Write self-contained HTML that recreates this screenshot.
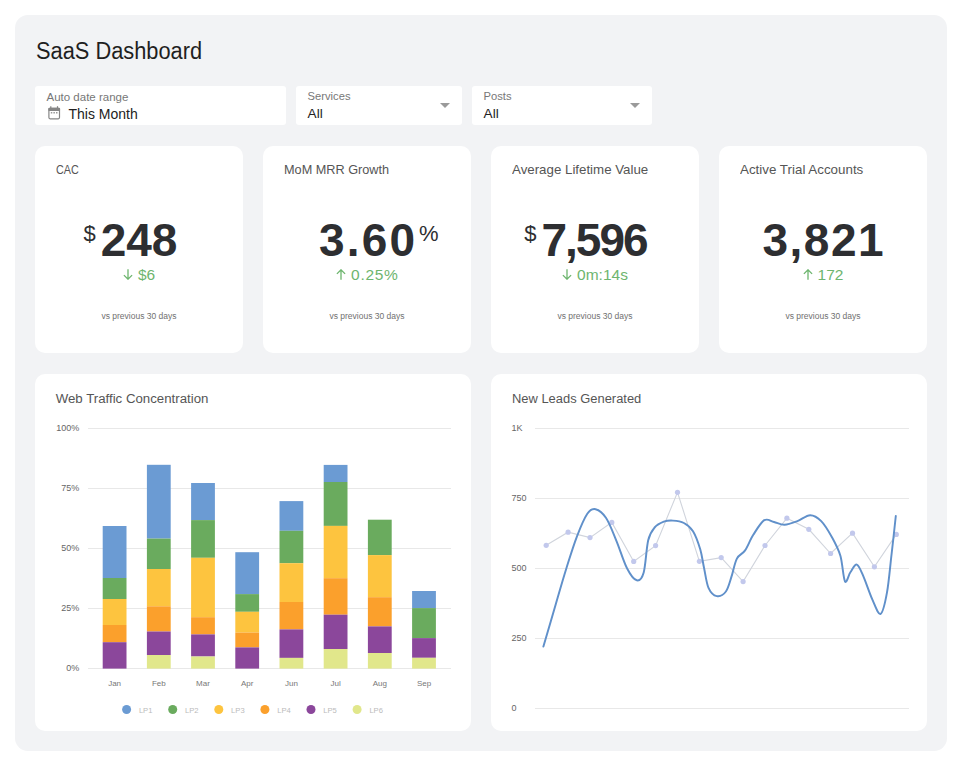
<!DOCTYPE html>
<html><head><meta charset="utf-8">
<style>
html,body{margin:0;padding:0;background:#fff;width:962px;height:766px;overflow:hidden;}
body{position:relative;font-family:"Liberation Sans",sans-serif;}
.a{position:absolute;white-space:nowrap;line-height:1;}
#panel{position:absolute;left:15px;top:15px;width:932px;height:736px;background:#f2f3f5;border-radius:13px;}
.card{position:absolute;background:#fff;border-radius:10px;}
.fbox{position:absolute;background:#fff;border-radius:3px;top:86px;height:39px;}
.klab{font-size:13.5px;color:#555;top:163.1px;}
.big{font-size:46px;font-weight:700;color:#2d2e31;top:217px;text-align:center;width:208px;}
.big span.n{position:relative;display:inline-block;}
.cur{position:absolute;font-size:22px;font-weight:400;right:100%;top:6px;margin-right:5px;}
.pct{position:absolute;font-size:22px;font-weight:400;left:100%;top:6px;margin-left:4px;}
.delta{font-size:15.5px;color:#6db56e;top:266.6px;text-align:center;width:208px;}
.vs{font-size:8.5px;color:#707070;top:312.3px;text-align:center;width:208px;}
.ctitle{font-size:13.25px;color:#555;top:391.6px;}
.yl{font-size:9px;color:#666;}
.xl{position:absolute;white-space:nowrap;line-height:1;font-size:8px;color:#777;top:679.7px;width:40px;text-align:center;}
.lg{position:absolute;white-space:nowrap;line-height:1;font-size:7.6px;color:#bbb;top:706.6px;}
svg.ov{position:absolute;left:0;top:0;}
.arr{display:inline-block;width:10px;height:11px;margin-right:5px;vertical-align:baseline;}
</style></head><body>
<div id="panel"></div>
<div class="a" style="left:36px;top:39.6px;font-size:23px;color:#1f1f1f;transform:scaleX(0.948);transform-origin:0 0;">SaaS Dashboard</div>

<div class="fbox" style="left:35px;width:251px;"></div>
<div class="fbox" style="left:296px;width:166px;"></div>
<div class="fbox" style="left:472px;width:180px;"></div>

<div class="a" style="left:46.5px;top:91.8px;font-size:11.5px;color:#777;">Auto date range</div>
<div class="a" style="left:68.5px;top:106.9px;font-size:14px;color:#222;">This Month</div>
<div class="a" style="left:307.6px;top:91.1px;font-size:11.2px;color:#777;">Services</div>
<div class="a" style="left:307.6px;top:106.5px;font-size:13.6px;color:#222;">All</div>
<div class="a" style="left:483.6px;top:91.1px;font-size:11.2px;color:#777;">Posts</div>
<div class="a" style="left:483.6px;top:106.5px;font-size:13.6px;color:#222;">All</div>

<div class="card" style="left:35px;top:146px;width:208px;height:207px;"></div>
<div class="card" style="left:263px;top:146px;width:208px;height:207px;"></div>
<div class="card" style="left:491px;top:146px;width:208px;height:207px;"></div>
<div class="card" style="left:719px;top:146px;width:208px;height:207px;"></div>

<div class="a klab" style="left:56px;transform:scaleX(0.80);transform-origin:0 0;">CAC</div>
<div class="a klab" style="left:283.5px;transform:scaleX(0.94);transform-origin:0 0;">MoM MRR Growth</div>
<div class="a klab" style="left:511.5px;transform:scaleX(0.985);transform-origin:0 0;">Average Lifetime Value</div>
<div class="a klab" style="left:740px;transform:scaleX(0.99);transform-origin:0 0;">Active Trial Accounts</div>

<div class="a big" style="left:35px;"><span class="n"><span class="cur">$</span>248</span></div>
<div class="a big" style="left:263px;"><span class="n"><span style="letter-spacing:2.2px">3.6</span>0<span class="pct">%</span></span></div>
<div class="a big" style="left:491px;"><span class="n"><span class="cur">$</span><span style="letter-spacing:-2px">7,59</span>6</span></div>
<div class="a big" style="left:719px;"><span class="n"><span style="letter-spacing:1.5px">3,82</span>1</span></div>

<div class="a delta" style="left:35px;"><svg class="arr" viewBox="0 0 10 11"><path d="M5 0.3V10.2M0.9 6.1L5 10.2L9.1 6.1" fill="none" stroke="#6db56e" stroke-width="1.3"/></svg>$6</div>
<div class="a delta" style="left:263px;"><svg class="arr" viewBox="0 0 10 11"><path d="M5 10.7V0.8M0.9 4.9L5 0.8L9.1 4.9" fill="none" stroke="#6db56e" stroke-width="1.3"/></svg><span style="letter-spacing:0.7px">0.25</span>%</div>
<div class="a delta" style="left:491px;"><svg class="arr" viewBox="0 0 10 11"><path d="M5 0.3V10.2M0.9 6.1L5 10.2L9.1 6.1" fill="none" stroke="#6db56e" stroke-width="1.3"/></svg>0m:14s</div>
<div class="a delta" style="left:719px;"><svg class="arr" viewBox="0 0 10 11"><path d="M5 10.7V0.8M0.9 4.9L5 0.8L9.1 4.9" fill="none" stroke="#6db56e" stroke-width="1.3"/></svg>172</div>

<div class="a vs" style="left:35px;">vs previous 30 days</div>
<div class="a vs" style="left:263px;">vs previous 30 days</div>
<div class="a vs" style="left:491px;">vs previous 30 days</div>
<div class="a vs" style="left:719px;">vs previous 30 days</div>

<div class="card" style="left:35px;top:374px;width:436px;height:357px;"></div>
<div class="card" style="left:491px;top:374px;width:436px;height:357px;"></div>

<div class="a ctitle" style="left:55.7px;">Web Traffic Concentration</div>
<div class="a ctitle" style="left:511.7px;transform:scaleX(0.975);transform-origin:0 0;">New Leads Generated</div>

<div class="a yl" style="left:39.3px;width:40px;text-align:right;top:424px;">100%</div>
<div class="a yl" style="left:39.3px;width:40px;text-align:right;top:484px;">75%</div>
<div class="a yl" style="left:39.3px;width:40px;text-align:right;top:544px;">50%</div>
<div class="a yl" style="left:39.3px;width:40px;text-align:right;top:604px;">25%</div>
<div class="a yl" style="left:39.3px;width:40px;text-align:right;top:664.2px;">0%</div>

<div class="a yl" style="left:511.5px;top:424px;">1K</div>
<div class="a yl" style="left:511.5px;top:494px;">750</div>
<div class="a yl" style="left:511.5px;top:564px;">500</div>
<div class="a yl" style="left:511.5px;top:634px;">250</div>
<div class="a yl" style="left:511.5px;top:704px;">0</div>

<div class="xl" style="left:94.6px">Jan</div>
<div class="xl" style="left:138.8px">Feb</div>
<div class="xl" style="left:183.0px">Mar</div>
<div class="xl" style="left:227.2px">Apr</div>
<div class="xl" style="left:271.4px">Jun</div>
<div class="xl" style="left:315.6px">Jul</div>
<div class="xl" style="left:359.8px">Aug</div>
<div class="xl" style="left:404.0px">Sep</div>
<div class="lg" style="left:138.9px">LP1</div>
<div class="lg" style="left:185.0px">LP2</div>
<div class="lg" style="left:231.1px">LP3</div>
<div class="lg" style="left:277.2px">LP4</div>
<div class="lg" style="left:323.3px">LP5</div>
<div class="lg" style="left:369.4px">LP6</div>

<svg class="ov" width="962" height="766" viewBox="0 0 962 766">
<!-- dropdown triangles -->
<polygon points="440,103 450,103 445,108" fill="#9a9a9a"/>
<polygon points="630,103 640,103 635,108" fill="#9a9a9a"/>
<!-- calendar icon -->
<g fill="none" stroke="#858585" stroke-width="1.2">
<rect x="48.9" y="108.3" width="10.6" height="10.5" rx="1.2"/>
<line x1="50.8" y1="106.2" x2="50.8" y2="108.5"/>
<line x1="57.5" y1="106.2" x2="57.5" y2="108.5"/>
</g>
<rect x="48.3" y="107.7" width="11.8" height="3.3" rx="1" fill="#858585"/>
<g fill="#9a9a9a"><rect x="50.8" y="112" width="1.5" height="1.5"/><rect x="53.4" y="112" width="1.5" height="1.5"/><rect x="56" y="112" width="1.5" height="1.5"/></g>
<!-- bar chart gridlines -->
<g stroke="#e8e8e8" stroke-width="1">
<line x1="88" y1="428.5" x2="451" y2="428.5"/>
<line x1="88" y1="488.5" x2="451" y2="488.5"/>
<line x1="88" y1="548.5" x2="451" y2="548.5"/>
<line x1="88" y1="608.5" x2="451" y2="608.5"/>
<line x1="88" y1="668.5" x2="451" y2="668.5"/>
</g>
<rect x="102.7" y="526.0" width="23.8" height="52.0" fill="#6b9bd3"/>
<rect x="102.7" y="578.0" width="23.8" height="21.0" fill="#6aab5e"/>
<rect x="102.7" y="599.0" width="23.8" height="26.0" fill="#fdc43f"/>
<rect x="102.7" y="625.0" width="23.8" height="17.2" fill="#fba02c"/>
<rect x="102.7" y="642.2" width="23.8" height="26.4" fill="#8b479b"/>
<rect x="146.9" y="464.8" width="23.8" height="73.8" fill="#6b9bd3"/>
<rect x="146.9" y="538.6" width="23.8" height="30.4" fill="#6aab5e"/>
<rect x="146.9" y="569.0" width="23.8" height="37.3" fill="#fdc43f"/>
<rect x="146.9" y="606.3" width="23.8" height="25.2" fill="#fba02c"/>
<rect x="146.9" y="631.5" width="23.8" height="23.5" fill="#8b479b"/>
<rect x="146.9" y="655.0" width="23.8" height="13.6" fill="#e1e78b"/>
<rect x="191.1" y="483.0" width="23.8" height="37.1" fill="#6b9bd3"/>
<rect x="191.1" y="520.1" width="23.8" height="37.7" fill="#6aab5e"/>
<rect x="191.1" y="557.8" width="23.8" height="59.4" fill="#fdc43f"/>
<rect x="191.1" y="617.2" width="23.8" height="17.2" fill="#fba02c"/>
<rect x="191.1" y="634.4" width="23.8" height="22.1" fill="#8b479b"/>
<rect x="191.1" y="656.5" width="23.8" height="12.1" fill="#e1e78b"/>
<rect x="235.3" y="552.2" width="23.8" height="41.9" fill="#6b9bd3"/>
<rect x="235.3" y="594.1" width="23.8" height="17.7" fill="#6aab5e"/>
<rect x="235.3" y="611.8" width="23.8" height="20.8" fill="#fdc43f"/>
<rect x="235.3" y="632.6" width="23.8" height="14.8" fill="#fba02c"/>
<rect x="235.3" y="647.4" width="23.8" height="21.2" fill="#8b479b"/>
<rect x="279.5" y="501.1" width="23.8" height="29.7" fill="#6b9bd3"/>
<rect x="279.5" y="530.8" width="23.8" height="32.4" fill="#6aab5e"/>
<rect x="279.5" y="563.2" width="23.8" height="38.8" fill="#fdc43f"/>
<rect x="279.5" y="602.0" width="23.8" height="27.4" fill="#fba02c"/>
<rect x="279.5" y="629.4" width="23.8" height="28.5" fill="#8b479b"/>
<rect x="279.5" y="657.9" width="23.8" height="10.7" fill="#e1e78b"/>
<rect x="323.7" y="464.9" width="23.8" height="17.1" fill="#6b9bd3"/>
<rect x="323.7" y="482.0" width="23.8" height="43.9" fill="#6aab5e"/>
<rect x="323.7" y="525.9" width="23.8" height="52.3" fill="#fdc43f"/>
<rect x="323.7" y="578.2" width="23.8" height="36.5" fill="#fba02c"/>
<rect x="323.7" y="614.7" width="23.8" height="34.3" fill="#8b479b"/>
<rect x="323.7" y="649.0" width="23.8" height="19.6" fill="#e1e78b"/>
<rect x="367.9" y="519.7" width="23.8" height="35.4" fill="#6aab5e"/>
<rect x="367.9" y="555.1" width="23.8" height="42.1" fill="#fdc43f"/>
<rect x="367.9" y="597.2" width="23.8" height="29.2" fill="#fba02c"/>
<rect x="367.9" y="626.4" width="23.8" height="26.6" fill="#8b479b"/>
<rect x="367.9" y="653.0" width="23.8" height="15.6" fill="#e1e78b"/>
<rect x="412.1" y="591.0" width="23.8" height="17.1" fill="#6b9bd3"/>
<rect x="412.1" y="608.1" width="23.8" height="30.0" fill="#6aab5e"/>
<rect x="412.1" y="638.1" width="23.8" height="19.7" fill="#8b479b"/>
<rect x="412.1" y="657.8" width="23.8" height="10.8" fill="#e1e78b"/>
<circle cx="126.6" cy="709.5" r="4.5" fill="#6b9bd3"/>
<circle cx="172.7" cy="709.5" r="4.5" fill="#6aab5e"/>
<circle cx="218.8" cy="709.5" r="4.5" fill="#fdc43f"/>
<circle cx="264.9" cy="709.5" r="4.5" fill="#fba02c"/>
<circle cx="311.0" cy="709.5" r="4.5" fill="#8b479b"/>
<circle cx="357.1" cy="709.5" r="4.5" fill="#e1e78b"/>

<!-- line chart gridlines -->
<g stroke="#e8e8e8" stroke-width="1">
<line x1="535" y1="428.5" x2="909" y2="428.5"/>
<line x1="535" y1="498.5" x2="909" y2="498.5"/>
<line x1="535" y1="568.5" x2="909" y2="568.5"/>
<line x1="535" y1="638.5" x2="909" y2="638.5"/>
<line x1="535" y1="708.5" x2="909" y2="708.5"/>
</g>
<path d="M546.2,545.3 L568.1,532.2 L590.0,537.6 L611.8,522.4 L633.7,561.4 L655.6,545.6 L677.5,492.3 L699.4,561.3 L721.2,557.6 L743.1,581.6 L765.0,545.5 L786.9,518.2 L808.8,529.3 L830.6,553.5 L852.5,533.2 L874.4,566.8 L896.3,534.4" fill="none" stroke="#d0d4dc" stroke-width="1.1"/>
<circle cx="546.2" cy="545.3" r="2.6" fill="#c2c8ec"/>
<circle cx="568.1" cy="532.2" r="2.6" fill="#c2c8ec"/>
<circle cx="590.0" cy="537.6" r="2.6" fill="#c2c8ec"/>
<circle cx="611.8" cy="522.4" r="2.6" fill="#c2c8ec"/>
<circle cx="633.7" cy="561.4" r="2.6" fill="#c2c8ec"/>
<circle cx="655.6" cy="545.6" r="2.6" fill="#c2c8ec"/>
<circle cx="677.5" cy="492.3" r="2.6" fill="#c2c8ec"/>
<circle cx="699.4" cy="561.3" r="2.6" fill="#c2c8ec"/>
<circle cx="721.2" cy="557.6" r="2.6" fill="#c2c8ec"/>
<circle cx="743.1" cy="581.6" r="2.6" fill="#c2c8ec"/>
<circle cx="765.0" cy="545.5" r="2.6" fill="#c2c8ec"/>
<circle cx="786.9" cy="518.2" r="2.6" fill="#c2c8ec"/>
<circle cx="808.8" cy="529.3" r="2.6" fill="#c2c8ec"/>
<circle cx="830.6" cy="553.5" r="2.6" fill="#c2c8ec"/>
<circle cx="852.5" cy="533.2" r="2.6" fill="#c2c8ec"/>
<circle cx="874.4" cy="566.8" r="2.6" fill="#c2c8ec"/>
<circle cx="896.3" cy="534.4" r="2.6" fill="#c2c8ec"/>
<path d="M543.4,646.6 C545.5,639.5 552.1,616.8 555.9,603.7 C559.7,590.6 562.9,579.4 566.4,568.2 C569.9,557.1 573.3,545.9 576.8,536.8 C580.3,527.7 584.2,518.4 587.3,513.8 C590.4,509.2 592.5,508.5 595.6,509.2 C598.7,509.9 602.6,512.7 606.1,518.0 C609.6,523.3 613.0,532.6 616.5,541.0 C620.0,549.4 623.6,561.7 627.0,568.2 C630.4,574.8 634.0,579.6 636.8,580.3 C639.6,581.0 641.8,579.1 643.7,572.4 C645.6,565.7 646.4,547.8 648.2,540.3 C650.0,532.8 652.0,530.6 654.6,527.5 C657.2,524.4 660.8,522.9 663.8,521.7 C666.8,520.6 669.5,520.4 672.9,520.6 C676.2,520.8 680.5,521.2 683.9,523.0 C687.2,524.8 690.3,526.8 693.0,531.2 C695.7,535.6 698.5,543.4 700.3,549.5 C702.1,555.6 702.6,561.3 704.0,567.7 C705.4,574.1 706.4,583.1 708.5,587.8 C710.6,592.5 713.9,595.5 716.8,596.1 C719.7,596.7 723.5,594.7 725.9,591.5 C728.3,588.3 729.6,582.4 731.4,576.9 C733.2,571.4 734.6,563.0 736.9,558.6 C739.2,554.2 742.4,554.4 745.1,550.4 C747.8,546.4 750.1,539.8 753.3,534.8 C756.5,529.8 760.8,522.3 764.3,520.2 C767.8,518.1 770.6,521.2 774.0,522.0 C777.4,522.8 780.7,524.9 784.6,524.7 C788.5,524.6 793.1,522.7 797.4,521.1 C801.7,519.5 806.2,515.2 810.2,515.2 C814.2,515.2 817.6,517.4 821.2,521.1 C824.9,524.8 828.9,531.7 832.1,537.5 C835.3,543.3 838.2,548.5 840.4,555.8 C842.5,563.1 843.3,578.6 845.0,581.4 C846.7,584.1 848.4,575.1 850.4,572.3 C852.4,569.5 854.7,564.0 856.8,564.6 C858.9,565.2 860.6,570.0 863.2,575.9 C865.8,581.8 869.5,593.4 872.4,599.7 C875.3,606.0 878.2,615.1 880.6,613.9 C883.0,612.7 885.2,602.4 887.0,592.4 C888.8,582.4 890.1,566.7 891.6,554.0 C893.1,541.3 895.1,522.3 895.8,516.0" fill="none" stroke="#6090ca" stroke-width="1.95" stroke-linecap="round" stroke-linejoin="round"/>
</svg>
</body></html>
